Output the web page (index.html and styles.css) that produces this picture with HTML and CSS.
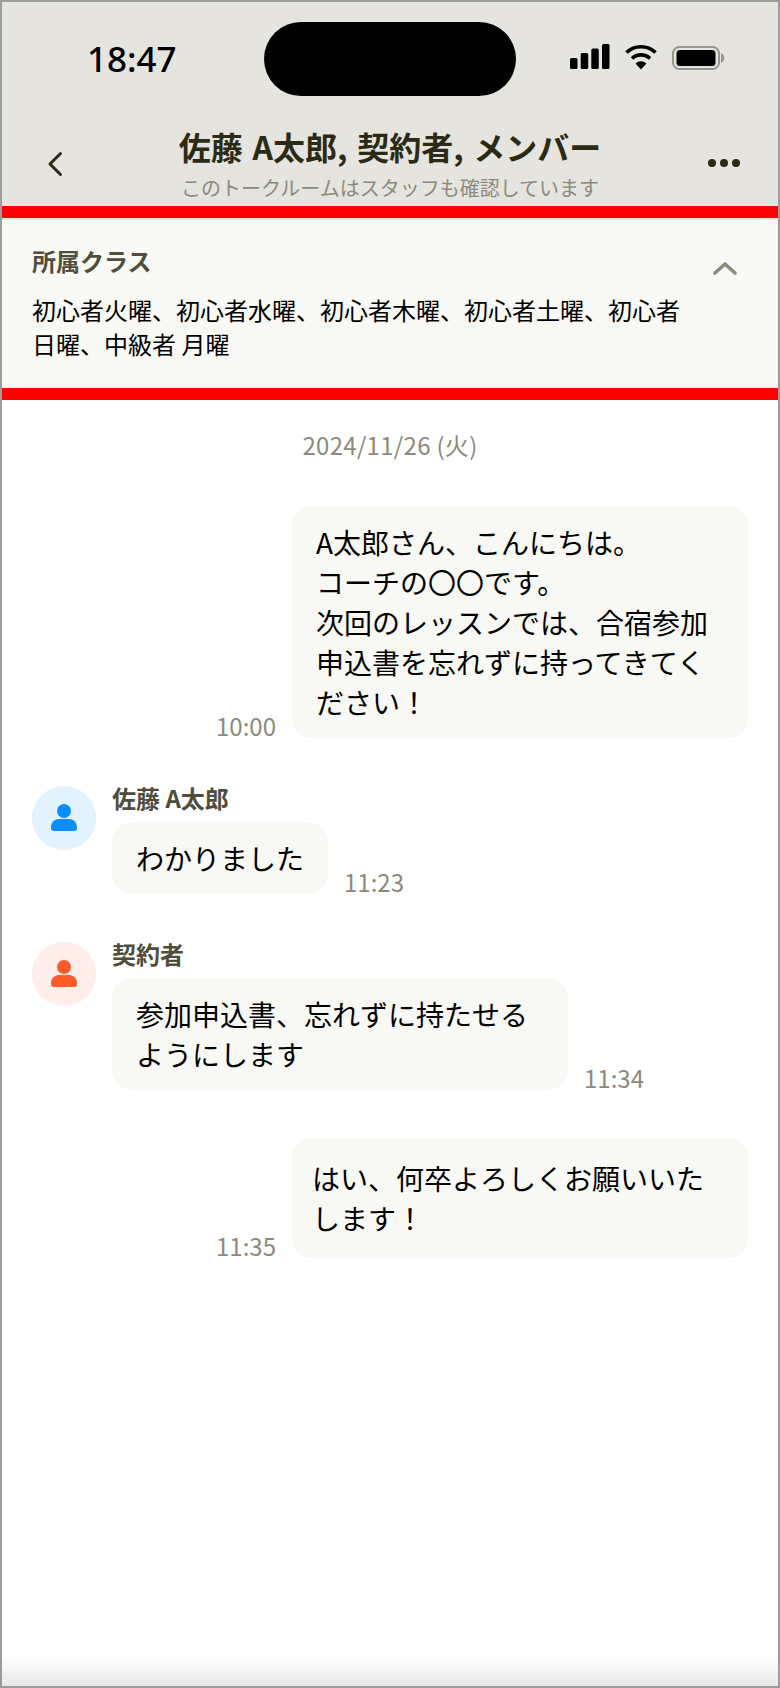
FILE: index.html
```html
<!DOCTYPE html>
<html lang="ja">
<head>
  <meta charset="UTF-8">
  <meta name="viewport" content="width=device-width, initial-scale=1.0">
  <title>トークルーム</title>
  <link rel="stylesheet" href="styles.css">
</head>
<body>
  <div class="phone">
    <div class="top">
      <div class="status-bar">
        <span class="clock">18:47</span>
        <div class="island"></div>
        <div class="status-icons">
          <svg width="40" height="26" viewBox="0 0 40 26">
            <rect x="0" y="14" width="7.500" height="11" rx="1.500"/>
            <rect x="10.700" y="9" width="7.500" height="16" rx="1.500"/>
            <rect x="21.300" y="4.500" width="7.500" height="20.500" rx="1.500"/>
            <rect x="32" y="0" width="7.500" height="25" rx="1.500"/>
          </svg>
          <svg width="34" height="26" viewBox="0 0 34 26">
            <path d="M2.500 8.500A21 21 0 0 1 31.500 8.500" fill="none" stroke="#000" stroke-width="3.600"/>
            <path d="M8 14.500A13 13 0 0 1 26 14.500" fill="none" stroke="#000" stroke-width="3.600"/>
            <path d="M11.500 19.500A8 8 0 0 1 22.500 19.500L17 25.500z"/>
          </svg>
          <svg width="54" height="26" viewBox="0 0 54 26">
            <rect x="1" y="3" width="46" height="22" rx="6.500" fill="none" stroke="#97968f" stroke-width="2"/>
            <rect x="4.500" y="6" width="39" height="16" rx="3.500"/>
            <path d="M49 9v10a5.500 5.500 0 0 0 0-10z" fill="#97968f"/>
          </svg>
        </div>
      </div>
      <div class="nav-bar">
        <svg class="nav-back" width="20" height="28" viewBox="0 0 20 28">
          <path d="M14.500 3.500L4 14l10.500 10.500" fill="none" stroke="#2b2a14" stroke-width="3" stroke-linecap="round" stroke-linejoin="round"/>
        </svg>
        <div class="nav-title">
          <h1>佐藤 A太郎, 契約者, メンバー</h1>
          <p>このトークルームはスタッフも確認しています</p>
        </div>
        <div class="nav-more"><i></i><i></i><i></i></div>
      </div>
    </div>
    <div class="red-bar"></div>
    <div class="class-panel">
      <div class="class-text">
        <h2>所属クラス</h2>
        <p>初心者火曜、初心者水曜、初心者木曜、初心者土曜、初心者日曜、中級者 月曜</p>
      </div>
      <svg class="class-toggle" width="26" height="16" viewBox="0 0 26 16">
        <path d="M3 13L13 4l10 9" fill="none" stroke="#8c8a7c" stroke-width="3.600" stroke-linecap="round" stroke-linejoin="round"/>
      </svg>
    </div>
    <div class="red-bar"></div>

    <div class="chat">
      <div class="date">2024/11/26 (火)</div>

      <div class="msg mine first">
        <span class="time">10:00</span>
        <div class="bubble b-fixed">A太郎さん、こんにちは。<br>コーチの〇〇です。<br>次回のレッスンでは、合宿参加申込書を忘れずに持ってきてください！</div>
      </div>

      <div class="msg other">
        <div class="avatar blue">
          <svg width="28" height="28" viewBox="0 0 28 28"><circle cx="14" cy="7" r="7"/><path d="M4 27h20a3 3 0 0 0 3-3v-1a8 8 0 0 0-8-8H9a8 8 0 0 0-8 8v1a3 3 0 0 0 3 3z"/></svg>
        </div>
        <div class="msg-body">
          <div class="name">佐藤 A太郎</div>
          <div class="msg-row">
            <div class="bubble">わかりました</div>
            <span class="time">11:23</span>
          </div>
        </div>
      </div>

      <div class="msg other">
        <div class="avatar red">
          <svg width="28" height="28" viewBox="0 0 28 28"><circle cx="14" cy="7" r="7"/><path d="M4 27h20a3 3 0 0 0 3-3v-1a8 8 0 0 0-8-8H9a8 8 0 0 0-8 8v1a3 3 0 0 0 3 3z"/></svg>
        </div>
        <div class="msg-body">
          <div class="name">契約者</div>
          <div class="msg-row">
            <div class="bubble b-fixed">参加申込書、忘れずに持たせるようにします</div>
            <span class="time">11:34</span>
          </div>
        </div>
      </div>

      <div class="msg mine">
        <span class="time">11:35</span>
        <div class="bubble b-fixed b-last">はい、何卒よろしくお願いいたします！</div>
      </div>
    </div>
    <div class="bottom-fade"></div>
  </div>
</body>
</html>
```

FILE: styles.css
```css
* {
  box-sizing: border-box;
}
html, body {
  margin: 0;
  padding: 0;
}
body {
  width: 780px;
  height: 1688px;
  overflow: hidden;
  background-color: #fff;
  font-family: "Noto Sans CJK JP", "Noto Sans", sans-serif;
  color: #000;
}
.phone {
  position: relative;
  width: 780px;
  height: 1688px;
  border: 2px solid #9c9c9c;
  display: flex;
  flex-direction: column;
  overflow: hidden;
}
.top {
  height: 204px;
  background-color: #e5e4de;
  flex-shrink: 0;
}
.status-bar {
  position: relative;
  height: 94px;
  padding: 20px 0 0 85px;
}
.clock {
  font-family: "Noto Sans", sans-serif;
  font-size: 35px;
  font-weight: 500;
  line-height: 74px;
}
.island {
  position: absolute;
  left: 262px;
  top: 20px;
  width: 252px;
  height: 74px;
  border-radius: 37px;
  background-color: #000;
}
.status-icons {
  position: absolute;
  right: 52px;
  top: 42px;
  display: flex;
  gap: 14px;
}
.status-icons svg {
  display: block;
}
.nav-bar {
  display: flex;
  align-items: flex-start;
  height: 110px;
  padding: 0 38px 0 44px;
}
.nav-back {
  margin: 54px 6px 0 0;
  flex-shrink: 0;
}
.nav-title {
  flex: 1;
  text-align: center;
  padding-top: 31px;
}
.nav-title h1 {
  margin: 0;
  font-size: 32px;
  font-weight: 700;
  line-height: 38px;
  word-spacing: 2.5px;
  color: #2b2a14;
}
.nav-title p {
  margin: 9px 0 0;
  font-size: 20px;
  line-height: 28px;
  color: #8c8a7c;
}
.nav-more {
  display: flex;
  gap: 4px;
  margin-top: 63px;
}
.nav-more i {
  width: 8px;
  height: 8px;
  border-radius: 50%;
  background-color: #2b2a14;
}
.red-bar {
  height: 12px;
  background-color: #f00;
  flex-shrink: 0;
}
.class-panel {
  display: flex;
  justify-content: space-between;
  height: 170px;
  padding: 24px 40px 0 30px;
  background-color: #f8f8f4;
  border-top: 2px solid #e5e4de;
  border-bottom: 2px solid #f0f0ec;
  flex-shrink: 0;
}
.class-text {
  width: 650px;
}
.class-text h2 {
  margin: 0 0 15px;
  font-size: 24px;
  font-weight: 700;
  line-height: 34px;
  color: #4f4d3c;
}
.class-text p {
  margin: 0;
  font-size: 24px;
  line-height: 34px;
}
.class-toggle {
  margin-top: 16px;
}
.chat {
  flex: 1;
  padding: 0 30px;
}
.date {
  margin-top: 28px;
  text-align: center;
  font-size: 24px;
  line-height: 34px;
  letter-spacing: 0.3px;
  color: #8c8a7c;
}
.bubble {
  padding: 16px 24px;
  background-color: #f8f8f4;
  border-radius: 20px;
  font-size: 28px;
  line-height: 40px;
}
.b-fixed {
  width: 456px;
}
.b-last {
  padding: 20px;
}
.time {
  font-size: 24px;
  line-height: 24px;
  color: #8c8a7c;
  white-space: nowrap;
}
.msg {
  display: flex;
  margin-top: 48px;
}
.mine {
  justify-content: flex-end;
  align-items: flex-end;
  gap: 16px;
}
.first {
  margin-top: 44px;
}
.avatar {
  width: 64px;
  height: 64px;
  border-radius: 50%;
  display: flex;
  align-items: center;
  justify-content: center;
  flex-shrink: 0;
}
.avatar svg {
  display: block;
}
.avatar.blue {
  background-color: #e3f2ff;
  fill: #0a8eff;
}
.avatar.red {
  background-color: #ffeeea;
  fill: #ff5a2b;
}
.msg-body {
  margin-left: 16px;
}
.name {
  font-size: 24px;
  font-weight: 700;
  line-height: 24px;
  color: #4f4d3c;
  margin-bottom: 12px;
}
.msg-row {
  display: flex;
  align-items: flex-end;
  gap: 16px;
}
.bottom-fade {
  position: absolute;
  left: 0;
  right: 0;
  bottom: 0;
  height: 30px;
  background: linear-gradient(to bottom, rgba(232, 232, 232, 0), rgba(232, 232, 232, 1));
}
```
